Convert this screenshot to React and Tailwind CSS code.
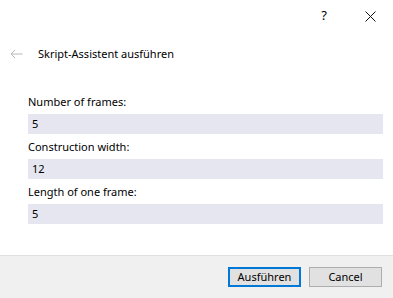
import React from 'react';

const fields = [
  { label: 'Number of frames:', value: '5' },
  { label: 'Construction width:', value: '12' },
  { label: 'Length of one frame:', value: '5' },
];

export default function App() {
  return (
    <div className="w-[393px] h-[298px] bg-white flex flex-col text-[11px] text-[#1a1a1a] font-['Noto_Sans',sans-serif] overflow-hidden">
      {/* title bar */}
      <div className="h-[32px] flex items-center justify-end shrink-0">
        <span className="w-[46px] text-center text-[13px] text-black">?</span>
        <div className="w-[46px] flex justify-center">
          <svg width="11" height="11" viewBox="0 0 11 11" stroke="#111" strokeWidth="1" fill="none">
            <path d="M0.5 0.5 L10.5 10.5 M10.5 0.5 L0.5 10.5" />
          </svg>
        </div>
      </div>

      {/* header */}
      <div className="h-[44px] flex items-center pl-[10px] shrink-0">
        <svg width="13" height="10" viewBox="0 0 13 10" stroke="#b8b8b8" strokeWidth="1" fill="none">
          <path d="M12.5 5 H1 M5 1 L1 5 L5 9" />
        </svg>
        <span className="ml-[15px] text-[11px] text-black">Skript-Assistent ausführen</span>
      </div>

      {/* form */}
      <div className="flex-1 flex flex-col px-[28px] pt-[18px] pr-[10px]">
        {fields.map((f) => (
          <div key={f.label} className="flex flex-col mb-[5px]">
            <label className="h-[20px] leading-[16px] text-black">{f.label}</label>
            <div className="h-[20px] bg-[#e6e6f0] px-[4px] flex items-center text-black">{f.value}</div>
          </div>
        ))}
      </div>

      {/* footer */}
      <div className="h-[43px] shrink-0 bg-[#f0f0f0] border-t border-[#dfdfdf] flex items-center justify-end gap-[8px] pr-[11px]">
        <button className="w-[73px] h-[20px] bg-[#e1e1e1] border-2 border-[#0078d7] text-black text-[11px] flex items-center justify-center">
          Ausführen
        </button>
        <button className="w-[73px] h-[20px] bg-[#e1e1e1] border border-[#adadad] text-black text-[11px] flex items-center justify-center">
          Cancel
        </button>
      </div>
    </div>
  );
}
